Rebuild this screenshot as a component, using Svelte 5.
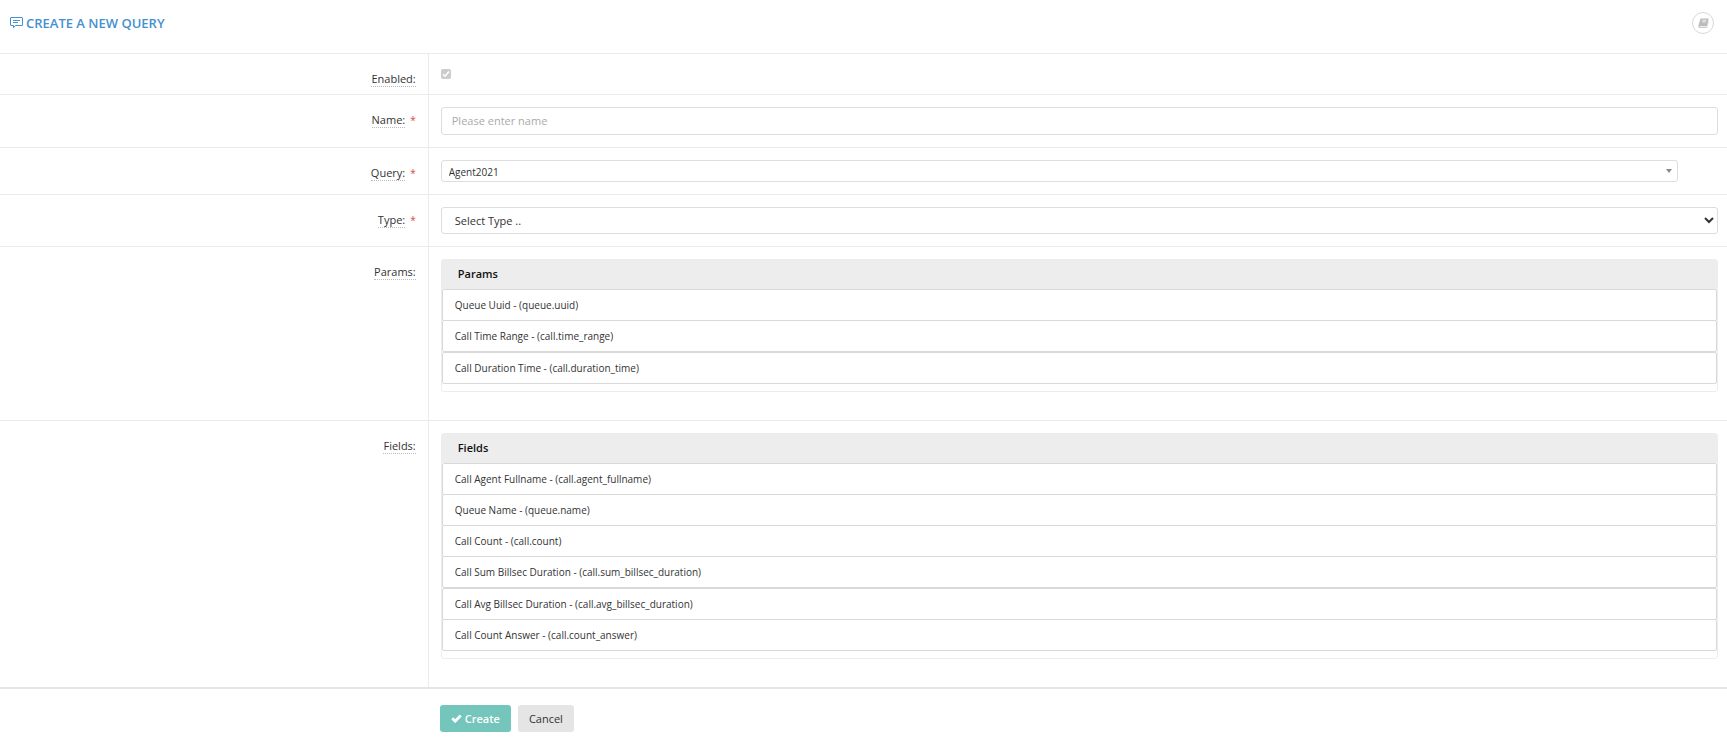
<script>
  let enabled = true;
  let name = "";
  let query = "Agent2021";
  let type = "";

  // wide marks the rows that get a full gap above them instead of a shared border
  const groups = [
    {
      title: "Params",
      items: [
        { label: "Queue Uuid", key: "queue.uuid" },
        { label: "Call Time Range", key: "call.time_range" },
        { label: "Call Duration Time", key: "call.duration_time", wide: true },
      ],
    },
    {
      title: "Fields",
      items: [
        { label: "Call Agent Fullname", key: "call.agent_fullname" },
        { label: "Queue Name", key: "queue.name" },
        { label: "Call Count", key: "call.count" },
        { label: "Call Sum Billsec Duration", key: "call.sum_billsec_duration" },
        { label: "Call Avg Billsec Duration", key: "call.avg_billsec_duration", wide: true },
        { label: "Call Count Answer", key: "call.count_answer" },
      ],
    },
  ];
</script>

<header>
  <h1>
    <svg width="13" height="12" viewBox="0 0 13 12" aria-hidden="true">
      <path d="M1 .5h11a.5.5 0 0 1 .5.5v7a.5.5 0 0 1-.5.5H5.500L3.500 10.800V8.500H1A.5.5 0 0 1 .5 8V1A.5.5 0 0 1 1 .5z" fill="none" stroke="currentColor" />
      <path d="M3 3.500h7M3 5.500h5" stroke="currentColor" />
    </svg>
    Create a new query
  </h1>
  <button type="button" class="docs" aria-label="Documentation">
    <svg width="11" height="10" viewBox="0 0 12 11" aria-hidden="true">
      <path d="M3.700.5h7.200q.9 0 .7.900L9.900 8.500q-.2.700-1 .700H2.200q-.8 0-.8.500t.8.500h7.200q.5 0 .6-.4l1.500-5.900.3.300-1.500 5.900q-.2.800-1 .800H2Q.2 10.900.3 9.300q0-.6.3-1.300L2.400 1.500Q2.700.5 3.700.5z" fill="currentColor" />
      <path d="M4.800 2.500h4.500M4.300 4.300h4.500" stroke="#fff" stroke-width=".8" />
    </svg>
  </button>
</header>

<form on:submit|preventDefault>
  <div class="row">
    <div class="label"><label for="enabled">Enabled:</label></div>
    <div class="field check">
      <input id="enabled" type="checkbox" bind:checked={enabled} disabled />
      <svg width="10" height="10" viewBox="0 0 10 10" aria-hidden="true">
        <path d="M2 5.200l2 2 4-4.700" fill="none" stroke="#fff" stroke-width="1.500" />
      </svg>
    </div>
  </div>

  <div class="row">
    <div class="label"><label for="name">Name:</label><span class="required">*</span></div>
    <div class="field">
      <input id="name" class="control" type="text" placeholder="Please enter name" bind:value={name} />
    </div>
  </div>

  <div class="row">
    <div class="label"><label for="query">Query:</label><span class="required">*</span></div>
    <div class="field">
      <div class="picker">
        <select id="query" class="control" bind:value={query}>
          <option>Agent2021</option>
        </select>
      </div>
    </div>
  </div>

  <div class="row">
    <div class="label"><label for="type">Type:</label><span class="required">*</span></div>
    <div class="field">
      <select id="type" class="control type" bind:value={type}>
        <option value="">Select Type ..</option>
      </select>
    </div>
  </div>

  {#each groups as group}
    <div class="row">
      <div class="label"><span class="name">{group.title}:</span></div>
      <div class="field">
        <section class="box">
          <h2>{group.title}</h2>
          <ul>
            {#each group.items as item}
              <li class:wide={item.wide}>{item.label} - ({item.key})</li>
            {/each}
          </ul>
        </section>
      </div>
    </div>
  {/each}

  <footer>
    <div class="actions">
      <button type="submit" class="btn create">
        <svg width="11" height="9" viewBox="0 0 11 9" aria-hidden="true">
          <path d="M1.300 4.300l2.900 2.900 5.500-5.700" fill="none" stroke="currentColor" stroke-width="2.800" />
        </svg>
        Create
      </button>
      <button type="button" class="btn">Cancel</button>
    </div>
  </footer>
</form>

<style>
  :global(body) {
    background: #fff;
    color: #333;
    font-family: "Open Sans", sans-serif;
    font-size: 11px;
    line-height: 15px;
  }

  header {
    display: flex;
    align-items: flex-start;
    justify-content: space-between;
    box-sizing: border-box;
    height: 53px;
    padding: 12px 13px 0 10px;
  }

  h1 {
    display: flex;
    align-items: center;
    gap: 3px;
    margin: 0;
    color: #4590d0;
    font-size: 13px;
    font-weight: 600;
    line-height: 22px;
    text-transform: uppercase;
  }

  .docs {
    display: flex;
    align-items: center;
    justify-content: center;
    width: 22px;
    height: 22px;
    padding: 0;
    border: 1px solid #d8d8d8;
    border-radius: 50%;
    background: #fff;
    color: #bbb;
  }

  .row {
    display: grid;
    grid-template-columns: calc(25% - 4px) 1fr;
    border-top: 1px solid #ebebeb;
  }

  .label {
    padding: 17px 12px 7px 0;
    text-align: right;
  }

  .label label,
  .label .name {
    display: inline-block;
    border-bottom: 1px dotted #bbb;
  }

  .required {
    margin-left: 5px;
    color: #e04545;
    font-size: 10px;
  }

  .field {
    min-width: 0;
    padding: 12px 9px 12px 12px;
    border-left: 1px solid #ebebeb;
  }

  .check {
    display: grid;
    align-content: start;
    justify-content: start;
    padding-top: 15px;
    padding-bottom: 0;
  }

  .check input,
  .check svg {
    grid-area: 1 / 1;
  }

  .check input {
    appearance: none;
    width: 10px;
    height: 10px;
    margin: 0;
    border-radius: 2px;
    background: #ccc;
  }

  .check svg {
    z-index: 1;
    pointer-events: none;
  }

  .control {
    display: block;
    box-sizing: border-box;
    width: 100%;
    height: 28px;
    padding: 0 10px 2px;
    border: 1px solid #ddd;
    border-radius: 3px;
    background: #fff;
    color: #333;
    font: inherit;
  }

  .control::placeholder {
    color: #aaa;
  }

  .control.type {
    height: 27px;
    padding: 0 5px 0 9px;
  }

  .picker {
    position: relative;
    margin-right: 40px;
  }

  .picker .control {
    appearance: none;
    height: 22px;
    padding: 2px 7px 0;
    font-size: 10px;
  }

  .picker::after {
    content: "";
    position: absolute;
    top: 9px;
    right: 6px;
    border: 3px solid transparent;
    border-top: 4px solid #888;
    border-bottom: 0;
    pointer-events: none;
  }

  .box {
    margin-bottom: 16px;
    padding-bottom: 7px;
    border: 1px solid #ededed;
    border-radius: 3px;
  }

  h2 {
    margin: 0;
    padding: 0 16px 2px;
    background: #ededed;
    color: #111;
    font-size: 11px;
    font-weight: 600;
    line-height: 27px;
  }

  ul {
    margin: 0;
    padding: 0;
    list-style: none;
  }

  li {
    margin-top: -1px;
    padding: 0 12px;
    border: 1px solid #d9d9d9;
    border-radius: 2px;
    font-size: 10px;
    line-height: 30px;
  }

  li:first-child,
  li.wide {
    margin-top: 0;
  }

  footer {
    padding: 16px 0 14px;
    border-top: 2px solid #e5e5e5;
  }

  .actions {
    display: flex;
    gap: 7px;
    margin-left: calc(25% + 8px);
  }

  .btn {
    display: flex;
    align-items: center;
    gap: 3px;
    height: 27px;
    padding: 0 11px;
    border: 0;
    border-radius: 3px;
    background: #e5e5e5;
    color: #333;
    font: inherit;
  }

  .create {
    background: #74c5bb;
    color: #fff;
    font-weight: 600;
  }
</style>
